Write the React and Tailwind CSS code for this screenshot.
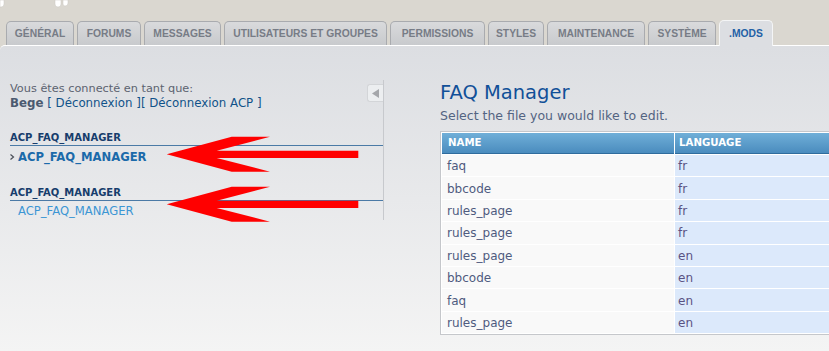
import React from 'react'

const tabs = [
  { label: 'GÉNÉRAL', w: 'w-[68px]' },
  { label: 'FORUMS', w: 'w-[64px]' },
  { label: 'MESSAGES', w: 'w-[77px]' },
  { label: 'UTILISATEURS ET GROUPES', w: 'w-[163px]' },
  { label: 'PERMISSIONS', w: 'w-[95px]' },
  { label: 'STYLES', w: 'w-[56px]' },
  { label: 'MAINTENANCE', w: 'w-[98px]' },
  { label: 'SYSTÈME', w: 'w-[68px]' },
]

const files = [
  { name: 'faq', lang: 'fr' },
  { name: 'bbcode', lang: 'fr' },
  { name: 'rules_page', lang: 'fr' },
  { name: 'rules_page', lang: 'fr' },
  { name: 'rules_page', lang: 'en' },
  { name: 'bbcode', lang: 'en' },
  { name: 'faq', lang: 'en' },
  { name: 'rules_page', lang: 'en' },
]

const RedArrow = ({ className }) => (
  <svg className={className} width="194" height="38" viewBox="166 136 194 38">
    <polygon
      points="166.7,154.3 231.7,136.7 270,136.7 216.7,150.7 358.3,150.7 358.3,158 216.7,158 270,171.7 231.7,171.7"
      fill="#ff0000"
    />
  </svg>
)

const App = () => {
  return (
    <div className="relative w-[829px] h-[351px] overflow-hidden bg-[#dad7d0] font-['DejaVu_Sans',sans-serif]">
      {/* logo remnants */}
      <div className="h-[20px]">
        <svg width="80" height="10" className="block">
          <path d="M0 0 H4 V4 Q4 7 1 7 H0 Z" fill="#ffffff" stroke="#c9c6c0" strokeWidth="0.5" />
          <path d="M55 0 H61 V4 Q61 7 58 7 Q55 7 55 4 Z" fill="#ffffff" stroke="#c9c6c0" strokeWidth="0.5" />
          <path d="M63 0 H68 V3 Q68 6 65 6 Q63 6 63 4 Z" fill="#ffffff" stroke="#c9c6c0" strokeWidth="0.5" />
        </svg>
      </div>

      {/* Tabs */}
      <div className="flex items-end h-[25px] pl-[6px] gap-[3px] font-['Liberation_Sans',sans-serif] text-[10.3px] font-bold">
        {tabs.map((t) => (
          <div
            key={t.label}
            className={`${t.w} h-[24px] flex items-center justify-center rounded-t-[5px] border border-b-0 border-[#a9abaf] bg-gradient-to-b from-[#d9dadc] to-[#c8cacd] text-[#777c86]`}
          >
            {t.label}
          </div>
        ))}
        <div className="relative z-10 -mb-px w-[54px] h-[26px] flex items-center justify-center rounded-t-[5px] border border-b-0 border-[#f4f5f6] bg-[#dcdee2] text-[#2361a6]">
          .MODS
        </div>
      </div>

      {/* Content */}
      <div className="h-[306px] rounded-tl-[5px] border-t border-white bg-gradient-to-b from-[#dcdee2] to-[#f4f4f4] flex pt-[34px]">
        {/* Left menu */}
        <div className="relative w-[384px] shrink-0 self-start h-[140px] border-r border-[#c7c9cd] pl-[10px] pt-px leading-[15px]">
          <button className="absolute right-0 top-[4px] w-[16px] h-[18px] rounded-l-[3px] bg-[#eceef0] border border-r-0 border-[#d3d5d8] flex items-center justify-center">
            <svg width="9" height="9" viewBox="0 0 9 9">
              <polygon points="8,0 8,9 1,4.5" fill="#a5a7ab" />
            </svg>
          </button>
          <p className="text-[11.3px] text-[#5c6370]">Vous êtes connecté en tant que:</p>
          <p className="text-[11.8px] text-[#105289]">
            <span className="font-bold text-[#4c5a70]">Bege</span> [ Déconnexion ][ Déconnexion ACP ]
          </p>

          <h3 className="mt-[20px] text-[10px] leading-[14px] font-bold text-[#173d6c] border-b border-[#4b7aa6]">ACP_FAQ_MANAGER</h3>
          <div className="h-[22px] flex items-center text-[11.6px] font-bold text-[#1b6aaa]">
            <svg width="8" height="6" viewBox="0 0 8 6" className="shrink-0">
              <path d="M0.5 0.5 L3.5 3 L0.5 5.5" stroke="#4a4f58" strokeWidth="1.2" fill="none" />
            </svg>
            ACP_FAQ_MANAGER
          </div>

          <h3 className="mt-[18px] text-[10px] leading-[14px] font-bold text-[#173d6c] border-b border-[#4b7aa6]">ACP_FAQ_MANAGER</h3>
          <div className="h-[21px] flex items-center pl-[8px] text-[11.6px] text-[#3c96d4]">ACP_FAQ_MANAGER</div>
        </div>

        {/* Main */}
        <div className="ml-[56px] w-[470px] shrink-0">
          <h1 className="pt-px text-[19.5px] leading-[24px] text-[#115098]">FAQ Manager</h1>
          <p className="mt-[3px] text-[12.5px] leading-[16px] text-[#536482]">Select the file you would like to edit.</p>
          <table className="mt-[7px] w-[470px] bg-white border border-[#c5c7cb] border-separate border-spacing-[1px] text-[12px]">
            <thead>
              <tr>
                <th className="w-[232px] h-[21px] pl-[6px] text-left text-[10.2px] font-bold text-white bg-gradient-to-b from-[#70afd8] to-[#4a8cbe] border-b border-[#2f6c9d]">
                  NAME
                </th>
                <th className="h-[21px] pl-[4px] text-left text-[10.2px] font-bold text-white bg-gradient-to-b from-[#70afd8] to-[#4a8cbe] border-b border-[#2f6c9d]">
                  LANGUAGE
                </th>
              </tr>
            </thead>
            <tbody>
              {files.map((f, i) => (
                <tr key={i}>
                  <td className="h-[21.4px] pl-[5px] pt-px bg-[#f9f9f9] text-[#4f5b7f]">{f.name}</td>
                  <td className="h-[21.4px] pl-[3px] pt-px bg-[#dce9fb] text-[#5a5283]">{f.lang}</td>
                </tr>
              ))}
            </tbody>
          </table>
        </div>
      </div>

      {/* annotation arrows */}
      <RedArrow className="absolute left-[166px] top-[136px]" />
      <RedArrow className="absolute left-[166px] top-[186px]" />
    </div>
  )
}

export default App
